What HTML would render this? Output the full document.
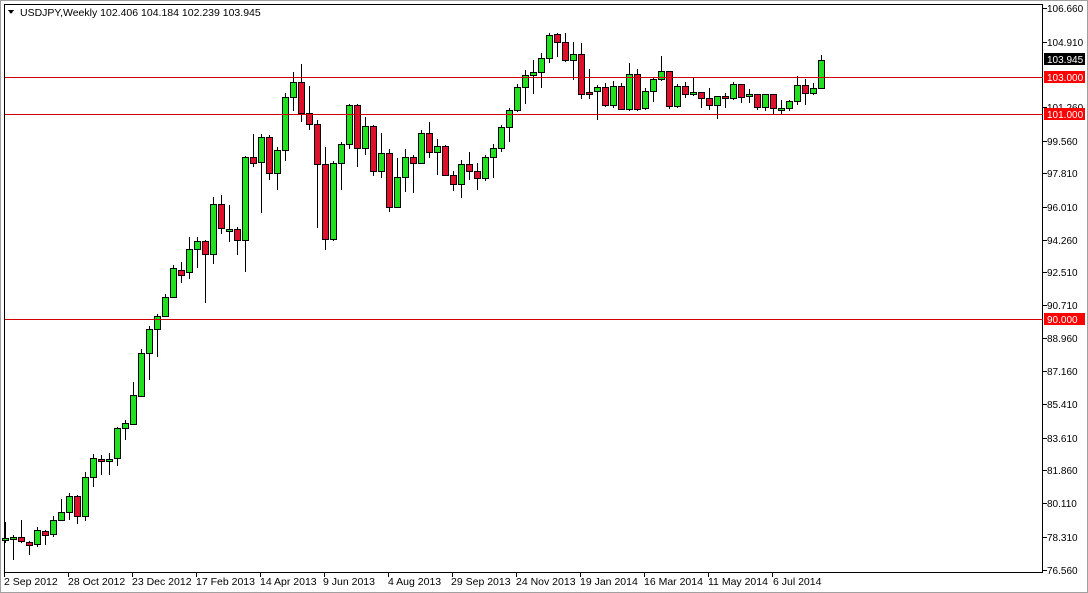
<!DOCTYPE html>
<html><head><meta charset="utf-8"><style>
html,body{margin:0;padding:0;background:#fff;}
body{width:1088px;height:593px;overflow:hidden;position:relative;font-family:"Liberation Sans",Arial,sans-serif;}
svg{position:absolute;left:0;top:0;}
text{font-family:"Liberation Sans",Arial,sans-serif;font-size:10.5px;fill:#000;}
.r text{font-size:10px;}
</style></head><body>
<svg id="s" width="1088" height="593" xmlns="http://www.w3.org/2000/svg" shape-rendering="crispEdges">
<rect x="0.5" y="0.5" width="1087" height="592" fill="#fff" stroke="#a0a0a0"/>
<rect x="4.5" y="4.5" width="1038" height="568" fill="#fff" stroke="#000"/>
<g id="c"></g>
<line x1="5" y1="77.5" x2="1043" y2="77.5" stroke="#d00000"/>
<line x1="5" y1="114.5" x2="1043" y2="114.5" stroke="#d00000"/>
<line x1="5" y1="319.5" x2="1043" y2="319.5" stroke="#d00000"/>
<polygon points="8,10 14,10 11,14" fill="#000"/>
<text x="20" y="16">USDJPY,Weekly  102.406 104.184 102.239 103.945</text>
<g id="ax"></g>
<g id="bx"></g>
<text x="4" y="585">2 Sep 2012</text>
<text x="68" y="585">28 Oct 2012</text>
<text x="132" y="585">23 Dec 2012</text>
<text x="196" y="585">17 Feb 2013</text>
<text x="260" y="585">14 Apr 2013</text>
<text x="323" y="585">9 Jun 2013</text>
<text x="388" y="585">4 Aug 2013</text>
<text x="451" y="585">29 Sep 2013</text>
<text x="516" y="585">24 Nov 2013</text>
<text x="580" y="585">19 Jan 2014</text>
<text x="644" y="585">16 Mar 2014</text>
<text x="708" y="585">11 May 2014</text>
<text x="773" y="585">6 Jul 2014</text>
<g class="r">
<text x="1047" y="12">106.660</text>
<text x="1047" y="46">104.910</text>
<text x="1047" y="111">101.260</text>
<text x="1047" y="145">99.560</text>
<text x="1047" y="177">97.810</text>
<text x="1047" y="211">96.010</text>
<text x="1047" y="244">94.260</text>
<text x="1047" y="276">92.510</text>
<text x="1047" y="309">90.710</text>
<text x="1047" y="342">88.960</text>
<text x="1047" y="375">87.160</text>
<text x="1047" y="408">85.410</text>
<text x="1047" y="442">83.610</text>
<text x="1047" y="474">81.860</text>
<text x="1047" y="507">80.110</text>
<text x="1047" y="541">78.310</text>
<text x="1047" y="574">76.560</text>
<rect x="1044" y="53" width="41" height="12" fill="#000"/>
<text x="1047" y="63" style="fill:#fff">103.945</text>
<rect x="1044" y="71" width="41" height="12" fill="#ff0000"/>
<text x="1047" y="81" style="fill:#fff">103.000</text>
<rect x="1044" y="108" width="41" height="12" fill="#ff0000"/>
<text x="1047" y="118" style="fill:#fff">101.000</text>
<rect x="1044" y="313" width="41" height="12" fill="#ff0000"/>
<text x="1047" y="323" style="fill:#fff">90.000</text>
</g>
</svg>
<script>
var d=[[538,538,522,543],[539,537,535,560],[537,541,520,543],[542,545,541,555],[544,530,527,547],[531,535,530,545],[534,520,516,537],[520,512,499,520],[512,496,493,520],[496,516,495,524],[516,477,472,521],[477,458,454,487],[459,461,455,475],[461,459,453,475],[458,428,427,466],[428,423,420,440],[424,395,382,425],[396,353,349,397],[353,329,326,380],[329,316,314,357],[316,297,294,313],[297,268,265,297],[270,275,262,283],[272,249,237,279],[249,241,237,268],[241,254,240,303],[254,204,197,264],[204,228,195,234],[229,229,205,242],[229,240,227,255],[240,157,156,272],[157,163,134,167],[162,137,134,213],[137,173,135,180],[173,150,147,190],[150,97,93,161],[97,82,72,111],[82,113,64,122],[113,124,86,130],[124,164,120,228],[164,239,147,250],[239,163,161,241],[163,144,142,190],[144,105,104,149],[105,148,104,167],[148,126,117,155],[126,171,125,176],[171,153,133,178],[153,207,149,212],[207,177,158,192],[177,157,149,192],[157,163,155,193],[163,133,130,164],[133,152,122,158],[152,146,139,175],[146,175,145,176],[175,184,171,191],[184,164,160,198],[164,171,152,180],[171,178,163,190],[178,157,155,181],[157,148,144,178],[148,127,125,152],[127,110,108,142],[110,87,84,112],[87,75,70,104],[75,72,60,94],[72,58,53,88],[58,35,33,63],[34,42,33,57],[42,60,33,62],[60,54,42,80],[54,94,43,99],[92,94,69,99],[91,87,85,120],[87,105,83,107],[105,86,81,108],[86,109,83,110],[109,74,63,111],[74,109,69,111],[108,91,88,110],[91,79,78,102],[79,71,56,81],[71,106,71,109],[106,86,84,108],[86,94,82,98],[94,92,77,96],[92,98,92,108],[98,105,88,110],[105,96,96,119],[96,98,93,108],[98,84,82,100],[84,97,84,103],[96,94,89,103],[94,107,94,110],[107,94,94,111],[94,108,94,114],[108,108,100,114],[108,101,100,111],[101,85,76,105],[85,93,79,105],[93,88,83,95],[88,60,55,88]];
var g=document.getElementById('c'),h='';
d.forEach(function(c,i){var x=5+8*i,o=c[0],cl=c[1],t=Math.min(o,cl),b=Math.max(o,cl);
h+='<line x1="'+(x+.5)+'" y1="'+c[2]+'" x2="'+(x+.5)+'" y2="'+c[3]+'" stroke="#000"/>';
if(b-t<2){b=t+2;}
h+='<rect x="'+(x-2.5)+'" y="'+(t+.5)+'" width="6" height="'+(b-t)+'" fill="'+(cl>o?'#e0102c':'#20e020')+'" stroke="#000"/>';});
g.innerHTML=h;
var a='',ys=[8,42,107,141,173,207,240,272,305,338,371,404,438,470,503,537,570];
ys.forEach(function(y){a+='<line x1="1043" y1="'+(y+.5)+'" x2="1047" y2="'+(y+.5)+'" stroke="#000"/>';});
document.getElementById('ax').innerHTML=a;
var bx='';for(var k=0;k<13;k++){var x=4+64*k;bx+='<line x1="'+(x+.5)+'" y1="573" x2="'+(x+.5)+'" y2="577" stroke="#000"/>';}
document.getElementById('bx').innerHTML=bx;
</script>
</body></html>
